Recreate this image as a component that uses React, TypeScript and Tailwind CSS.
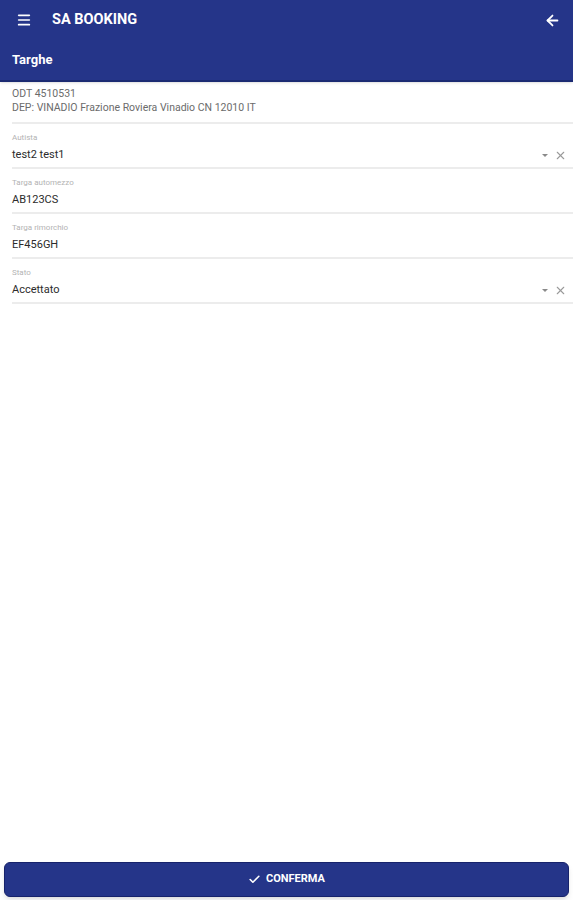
import { Menu, ArrowLeft, X, Check } from 'lucide-react';

type Field = { label: string; value: string; select?: boolean };

const fields: Field[] = [
  { label: 'Autista', value: 'test2 test1', select: true },
  { label: 'Targa automezzo', value: 'AB123CS' },
  { label: 'Targa rimorchio', value: 'EF456GH' },
  { label: 'Stato', value: 'Accettato', select: true },
];

function FieldRow({ field }: { field: Field }) {
  return (
    <div className="ml-3 border-b-2 border-[#ececec] pt-[9px] pb-[5px]">
      <div className="text-[8px] leading-[10px] text-[#b3b3b3]">{field.label}</div>
      <div className="mt-[5px] flex items-center pr-[6px]">
        <span className="flex-1 text-[11px] leading-[14px] text-[#2b2b2b]">{field.value}</span>
        {field.select && (
          <div className="flex items-center gap-[6px] text-[#9a9a9a]">
            <span className="h-0 w-0 border-x-[3px] border-t-[3px] border-x-transparent border-t-[#8a8a8a]" />
            <X size={13} strokeWidth={2} />
          </div>
        )}
      </div>
    </div>
  );
}

export default function App() {
  return (
    <div className="h-screen flex flex-col bg-white font-['Roboto',sans-serif]">
      {/* App bar */}
      <header className="bg-[#253589] text-white border-b-2 border-[#1b2a72] shadow-sm">
        <div className="h-10 flex items-center pl-4 pr-[12px]">
          <Menu size={16} strokeWidth={2.5} />
          <h1 className="ml-[20px] text-[14.5px] font-bold">SA BOOKING</h1>
          <div className="flex-1" />
          <ArrowLeft size={17} strokeWidth={2.5} />
        </div>
        <div className="h-10 flex items-center px-3">
          <span className="text-[13px] font-bold">Targhe</span>
        </div>
      </header>

      {/* Content */}
      <main className="flex-1">
        <div className="ml-3 border-b-2 border-[#ececec] pt-[5px] pb-[7px] text-[10.5px] leading-[14px] text-[#6b6b6b]">
          <div>ODT 4510531</div>
          <div>DEP: VINADIO Frazione Roviera Vinadio CN 12010 IT</div>
        </div>
        {fields.map((f) => (
          <FieldRow key={f.label} field={f} />
        ))}
      </main>

      {/* Footer button */}
      <div className="px-1 pb-[3px]">
        <button className="w-full h-[35px] rounded-md bg-[#253589] border border-[#17236b] shadow-md text-white flex items-center justify-center gap-[5px]">
          <Check size={13} strokeWidth={3} />
          <span className="text-[11px] font-bold">CONFERMA</span>
        </button>
      </div>
    </div>
  );
}
